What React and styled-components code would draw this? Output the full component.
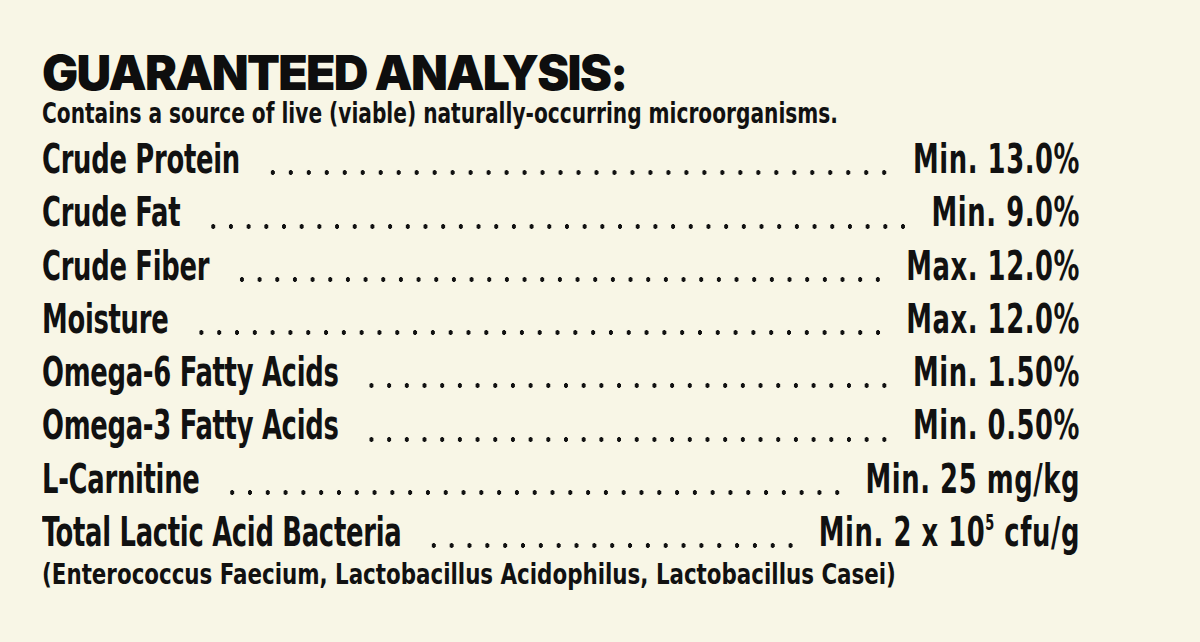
import React from 'react';
import styled, { createGlobalStyle } from 'styled-components';

// the label face is much narrower than anything installed, so the
// condensed blocks are drawn at full height and squeezed horizontally
const ROW_SQUEEZE = 0.7;
const CONTENT_WIDTH = 1038;

const GlobalStyle = createGlobalStyle`
  html, body {
    margin: 0;
    padding: 0;
    background: #f8f6e6;
  }
  body {
    width: 1200px;
    height: 642px;
    overflow: hidden;
  }
`;

const Panel = styled.div`
  width: 1200px;
  height: 642px;
  box-sizing: border-box;
  padding: 49px 0 0 42px;
  background: #f8f6e6;
  color: #111;
  overflow: hidden;
`;

const condensed = `
  font-family: 'DejaVu Sans Condensed', 'DejaVu Sans', sans-serif;
  font-stretch: condensed;
  font-weight: 700;
  white-space: nowrap;
  transform-origin: 0 0;
`;

const Title = styled.h1`
  margin: 0;
  font-family: Inter, 'DejaVu Sans', sans-serif;
  font-weight: 900;
  font-size: 48px;
  line-height: 48px;
  letter-spacing: -1.7px;
  color: #0e0e0e;
`;

const Subtitle = styled.p`
  ${condensed}
  margin: 0 0 2px;
  font-size: 28px;
  line-height: 34px;
  transform: scaleX(0.8);
`;

const Sheet = styled.div`
  display: flex;
  flex-direction: column;
  width: ${CONTENT_WIDTH / ROW_SQUEEZE}px;
  transform: scaleX(${ROW_SQUEEZE});
  transform-origin: 0 0;
`;

const Row = styled.div`
  ${condensed}
  display: flex;
  align-items: baseline;
  height: 53.3px;
  font-size: 41px;
  line-height: 53.3px;
`;

const Label = styled.span`
  letter-spacing: -0.4px;
`;

const Leader = styled.span`
  flex: 1;
  align-self: flex-end;
  height: 7px;
  margin: 0 ${(p) => p.$end}px 10px ${(p) => p.$start}px;
  background-image: radial-gradient(3.4px 2.7px at 50% 50%, #111 78%, transparent 100%);
  background-size: 25.2px 7px;
  background-repeat: space no-repeat;
`;

const Value = styled.span`
  letter-spacing: 0.8px;
`;

const Sup = styled.sup`
  font-size: 0.5em;
  line-height: 0;
  vertical-align: 0.8em;
`;

const Note = styled.p`
  ${condensed}
  margin: 0;
  font-size: 29px;
  line-height: 30px;
  transform: scaleX(0.82);
`;

const rows = [
  { label: 'Crude Protein', value: 'Min. 13.0%' },
  { label: 'Crude Fat', value: 'Min. 9.0%' },
  { label: 'Crude Fiber', value: 'Max. 12.0%' },
  { label: 'Moisture', value: 'Max. 12.0%' },
  { label: 'Omega-6 Fatty Acids', value: 'Min. 1.50%' },
  { label: 'Omega-3 Fatty Acids', value: 'Min. 0.50%' },
  { label: 'L-Carnitine', value: 'Min. 25 mg/kg' },
  {
    label: 'Total Lactic Acid Bacteria',
    value: (
      <>
        Min. 2 x 10<Sup>5</Sup> cfu/g
      </>
    ),
  },
];

export default function App() {
  return (
    <>
      <GlobalStyle />
      <Panel>
        <Title>GUARANTEED ANALYSIS:</Title>
        <Subtitle>Contains a source of live (viable) naturally-occurring microorganisms.</Subtitle>
        <Sheet>
          {rows.map((r) => (
            <Row key={r.label}>
              <Label>{r.label}</Label>
              <Leader $start={34} $end={28} />
              <Value>{r.value}</Value>
            </Row>
          ))}
        </Sheet>
        <Note>(Enterococcus Faecium, Lactobacillus Acidophilus, Lactobacillus Casei)</Note>
      </Panel>
    </>
  );
}
